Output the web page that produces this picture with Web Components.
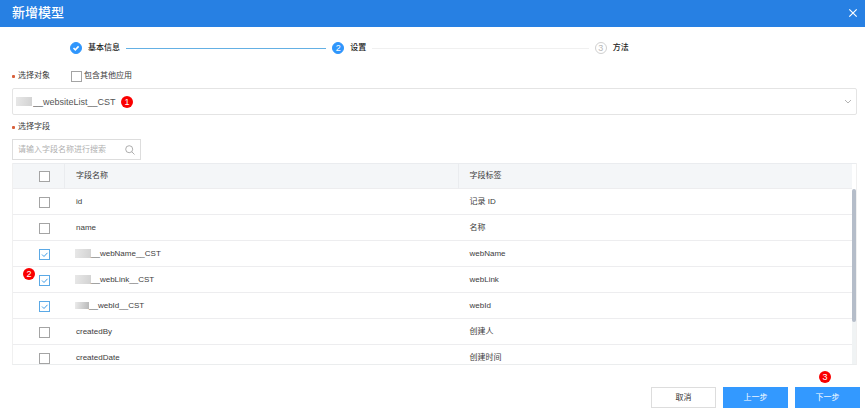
<!DOCTYPE html>
<html lang="zh-CN">
<head>
<meta charset="utf-8">
<meta name="viewport" content="width=device-width, initial-scale=1">
<title>新增模型</title>
<style>
  body {
    background: #ffffff;
    color: #3c3c3c;
    font-family: "Liberation Sans", "Noto Sans CJK SC", sans-serif;
    font-size: 8px;
    line-height: 12px;
    margin: 0;
  }
</style>
</head>
<body>

<model-dialog></model-dialog>

<script>
function attach( element, html ) {
  const template = document.createElement( 'template' )
  template.innerHTML = html;

  const shadowRoot = element.attachShadow( {mode: 'open'} );
  shadowRoot.appendChild( template.content.cloneNode( true ) );
}

// Red numbered marker
class Marker extends HTMLElement {
  constructor() {
    super();

    attach( this, `
      <style>
        :host {
          align-items: center;
          background: #fa0000;
          border-radius: 50%;
          box-sizing: border-box;
          color: #ffffff;
          display: inline-flex;
          font-size: 9px;
          height: 12px;
          justify-content: center;
          width: 12px;
        }
      </style>
      <slot></slot>
    ` );
  }
}

// Blurred out prefix
class Mask extends HTMLElement {
  constructor() {
    super();

    attach( this, `
      <style>
        :host {
          background: linear-gradient( 100deg, #e8e8e8, #d2d2d2 );
          display: inline-block;
          height: 9px;
          vertical-align: middle;
          width: 16px;
        }

        :host( [small] ) {
          background: linear-gradient( 100deg, #ececec, #b8b8b8 );
          height: 7px;
          width: 14px;
        }
      </style>
    ` );
  }
}

class CheckBox extends HTMLElement {
  constructor() {
    super();

    attach( this, `
      <style>
        :host {
          display: inline-flex;
        }

        label {
          align-items: center;
          display: flex;
          gap: 2px;
        }

        input {
          appearance: none;
          background: #ffffff;
          border: 1px solid #a4a4a4;
          box-sizing: border-box;
          height: 11px;
          margin: 0;
          width: 11px;
        }

        .box {
          display: grid;
        }

        .box > * {
          grid-area: 1 / 1;
        }

        svg {
          height: 11px;
          pointer-events: none;
          visibility: hidden;
          width: 11px;
        }

        input:checked {
          border-color: #5ba9e6;
        }

        input:checked + svg {
          visibility: visible;
        }
      </style>
      <label>
        <span class="box">
          <input type="checkbox">
          <svg viewBox="0 0 11 11" fill="none" stroke="#3d9be6"><path d="M3 5.5 L5 7.5 L8.5 3.8"/></svg>
        </span>
        <slot></slot>
      </label>
    ` );

    this.$input = this.shadowRoot.querySelector( 'input' );
  }

  static get observedAttributes() {
    return [
      'checked',
      'name'
    ];
  }

  attributeChangedCallback( name, old, value ) {
    this.$input.checked = this.hasAttribute( 'checked' );

    if( this.hasAttribute( 'name' ) ) {
      this.$input.setAttribute( 'aria-label', this.getAttribute( 'name' ) );
    }
  }
}

class Step extends HTMLElement {
  constructor() {
    super();

    attach( this, `
      <style>
        :host {
          align-items: center;
          color: #222222;
          display: flex;
          flex: 1;
          font-weight: 500;
          gap: 6px;
        }

        .icon {
          align-items: center;
          background: #2f96fc;
          border: 1px solid #2f96fc;
          border-radius: 50%;
          box-sizing: border-box;
          color: #ffffff;
          display: flex;
          font-size: 9px;
          height: 12px;
          justify-content: center;
          width: 12px;
        }

        svg, :host( [state=done] ) .number {
          display: none;
        }

        :host( [state=done] ) svg {
          display: block;
        }

        :host( [state=wait] ) .icon {
          background: #ffffff;
          border-color: #d0d0d0;
          color: #b8b8b8;
        }

        .line {
          background: #f0f0f0;
          flex: 1;
          height: 1px;
          margin-right: 6px;
        }

        :host( [state=done] ) .line {
          background: #64b0e4;
        }

        :host( :last-of-type ) .line {
          visibility: hidden;
        }
      </style>
      <span class="icon">
        <span class="number"></span>
        <svg width="10" height="10" viewBox="0 0 10 10" fill="none" stroke="#ffffff" stroke-width="1.6"><path d="M2.5 5 L4.3 6.8 L7.6 3.4"/></svg>
      </span>
      <slot></slot>
      <span class="line"></span>
    ` );
  }

  static get observedAttributes() {
    return ['number'];
  }

  attributeChangedCallback( name, old, value ) {
    this.shadowRoot.querySelector( '.number' ).textContent = value;
  }
}

// Label with the required mark
class FieldLabel extends HTMLElement {
  constructor() {
    super();

    attach( this, `
      <style>
        :host {
          align-items: center;
          display: flex;
          gap: 3px;
        }

        i {
          background: #d9603b;
          border-radius: 1px;
          height: 3px;
          width: 3px;
        }
      </style>
      <i></i>
      <slot></slot>
    ` );
  }
}

const FIELDS = [
  {name: 'id', label: '记录 ID'},
  {name: 'name', label: '名称'},
  {name: '__webName__CST', label: 'webName', mask: true, checked: true},
  {name: '__webLink__CST', label: 'webLink', mask: true, checked: true, marker: 2},
  {name: '__webId__CST', label: 'webId', mask: 'small', checked: true},
  {name: 'createdBy', label: '创建人'},
  {name: 'createdDate', label: '创建时间'}
];

class FieldTable extends HTMLElement {
  constructor() {
    super();

    const rows = FIELDS.map( ( field ) => `
      <tr>
        <td class="pick">
          ${field.marker ? `<model-marker>${field.marker}</model-marker>` : ''}
          <model-checkbox name="${field.name}" ${field.checked ? 'checked' : ''}></model-checkbox>
        </td>
        <td class="${field.mask ? 'masked' : ''}">${field.mask ? `<model-mask ${field.mask === 'small' ? 'small' : ''}></model-mask>` : ''}${field.name}</td>
        <td>${field.label}</td>
      </tr>` ).join( '' );

    attach( this, `
      <style>
        :host {
          border-bottom: 1px solid #ebedee;
          border-left: 1px solid #f0f0f0;
          border-right: 1px solid #f0f0f0;
          display: flex;
        }

        .scroll {
          flex: 1;
          height: 201px;
          overflow-y: auto;
          scrollbar-width: none;
        }

        table {
          border-collapse: separate;
          border-spacing: 0;
          table-layout: fixed;
          width: 100%;
        }

        th, td {
          border-bottom: 1px solid #ededef;
          box-sizing: border-box;
          font-weight: normal;
          height: 26px;
          padding: 0 0 0 11px;
          text-align: left;
        }

        th {
          background: #f4f6f8;
          border-right: 1px solid #eaecef;
          border-top: 1px solid #eaecef;
          position: sticky;
          top: 0;
          z-index: 1;
        }

        th:last-child {
          border-right: 0;
        }

        .pick {
          padding: 2px 0 0 26px;
          position: relative;
          width: 52px;
        }

        th.pick {
          position: sticky;
        }

        .pick model-checkbox {
          vertical-align: middle;
        }

        .pick model-marker {
          left: 10px;
          position: absolute;
          top: 1px;
        }

        .masked {
          padding-left: 10px;
        }

        .track {
          background: linear-gradient( #f0f3f4, #f0f3f4 ) 0 26px no-repeat;
          border-top: 1px solid #eaecef;
          box-sizing: border-box;
          padding-top: 25px;
          width: 4px;
        }

        .thumb {
          background: #b5bdc9;
          border-radius: 2px;
          height: 76%;
        }
      </style>
      <div class="scroll">
        <table>
          <thead>
            <tr>
              <th class="pick"><model-checkbox name="全选"></model-checkbox></th>
              <th>字段名称</th>
              <th>字段标签</th>
            </tr>
          </thead>
          <tbody>${rows}</tbody>
        </table>
      </div>
      <div class="track"><div class="thumb"></div></div>
    ` );
  }
}

class Dialog extends HTMLElement {
  constructor() {
    super();

    attach( this, `
      <style>
        :host {
          display: block;
        }

        header {
          align-items: center;
          background: #2780e3;
          color: #ffffff;
          display: flex;
          height: 27px;
          justify-content: space-between;
          padding: 0 7px 0 12px;
        }

        h1 {
          font-size: 13px;
          font-weight: 500;
          line-height: 24px;
          margin: 0 0 2px 0;
        }

        button {
          background: #3399ff;
          border: 1px solid #3399ff;
          box-sizing: border-box;
          color: #ffffff;
          font: inherit;
          height: 21px;
          padding: 0;
          width: 65px;
        }

        header button {
          background: none;
          border: 0;
          display: flex;
          height: 10px;
          margin-bottom: 2px;
          width: 10px;
        }

        button.plain {
          background: #ffffff;
          border-color: #dddddd;
          color: #333333;
        }

        .steps {
          display: flex;
          padding: 15px 8px 0 70px;
        }

        main {
          padding: 16px 8px 0 12px;
        }

        .row {
          align-items: center;
          display: flex;
          gap: 21px;
        }

        .select {
          align-items: center;
          display: grid;
          margin: 6px 0;
        }

        .select > * {
          grid-area: 1 / 1;
        }

        select {
          appearance: none;
          background: #ffffff;
          border: 1px solid #e4e4e4;
          border-radius: 2px;
          box-sizing: border-box;
          color: #555555;
          font: inherit;
          font-size: 9px;
          height: 27px;
          padding: 1px 20px 0 20px;
          width: 100%;
        }

        .over {
          align-items: center;
          display: flex;
          justify-content: space-between;
          padding: 0 5px 0 4px;
          pointer-events: none;
        }

        .over model-marker {
          margin-left: 89px;
          margin-right: auto;
        }

        .search {
          align-items: center;
          border: 1px solid #dddddd;
          box-sizing: border-box;
          display: flex;
          height: 21px;
          margin: 6px 0 3px 0;
          padding: 0 5px;
          width: 129px;
        }

        input {
          background: none;
          border: 0;
          color: inherit;
          flex: 1;
          font: inherit;
          min-width: 0;
          outline: none;
          padding: 0;
        }

        input::placeholder {
          color: #b0b0b0;
        }

        footer {
          align-items: flex-end;
          display: flex;
          gap: 7px;
          justify-content: flex-end;
          padding: 22px 5px 8px 12px;
        }

        .next {
          position: relative;
        }

        .next model-marker {
          left: 24px;
          position: absolute;
          top: -16px;
        }
      </style>
      <header>
        <h1>新增模型</h1>
        <button type="button" aria-label="关闭">
          <svg width="10" height="10" viewBox="0 0 10 10" fill="none" stroke="#ffffff" stroke-width="1.2"><path d="M1.3 1.3 L8.7 8.7 M8.7 1.3 L1.3 8.7"/></svg>
        </button>
      </header>
      <div class="steps">
        <model-step number="1" state="done">基本信息</model-step>
        <model-step number="2" state="active">设置</model-step>
        <model-step number="3" state="wait">方法</model-step>
      </div>
      <main>
        <div class="row">
          <model-label><label for="object">选择对象</label></model-label>
          <model-checkbox>包含其他应用</model-checkbox>
        </div>
        <div class="select">
          <select id="object">
            <option>__websiteList__CST</option>
          </select>
          <div class="over">
            <model-mask></model-mask>
            <model-marker>1</model-marker>
            <svg width="8" height="8" viewBox="0 0 8 8" fill="none" stroke="#b4b4b4"><path d="M1 2 L4 5 L7 2"/></svg>
          </div>
        </div>
        <model-label><label for="search">选择字段</label></model-label>
        <div class="search">
          <input id="search" type="text" placeholder="请输入字段名称进行搜索">
          <svg width="10" height="10" viewBox="0 0 10 10" fill="none" stroke="#999999" stroke-width="0.8"><circle cx="4.2" cy="4.2" r="3.5"/><path d="M6.8 6.8 L9.5 9.5"/></svg>
        </div>
        <model-fields></model-fields>
      </main>
      <footer>
        <button type="button" class="plain">取消</button>
        <button type="button">上一步</button>
        <div class="next">
          <model-marker>3</model-marker>
          <button type="button">下一步</button>
        </div>
      </footer>
    ` );
  }
}

window.customElements.define( 'model-marker', Marker );
window.customElements.define( 'model-mask', Mask );
window.customElements.define( 'model-checkbox', CheckBox );
window.customElements.define( 'model-step', Step );
window.customElements.define( 'model-label', FieldLabel );
window.customElements.define( 'model-fields', FieldTable );
window.customElements.define( 'model-dialog', Dialog );
</script>
</body>
</html>
